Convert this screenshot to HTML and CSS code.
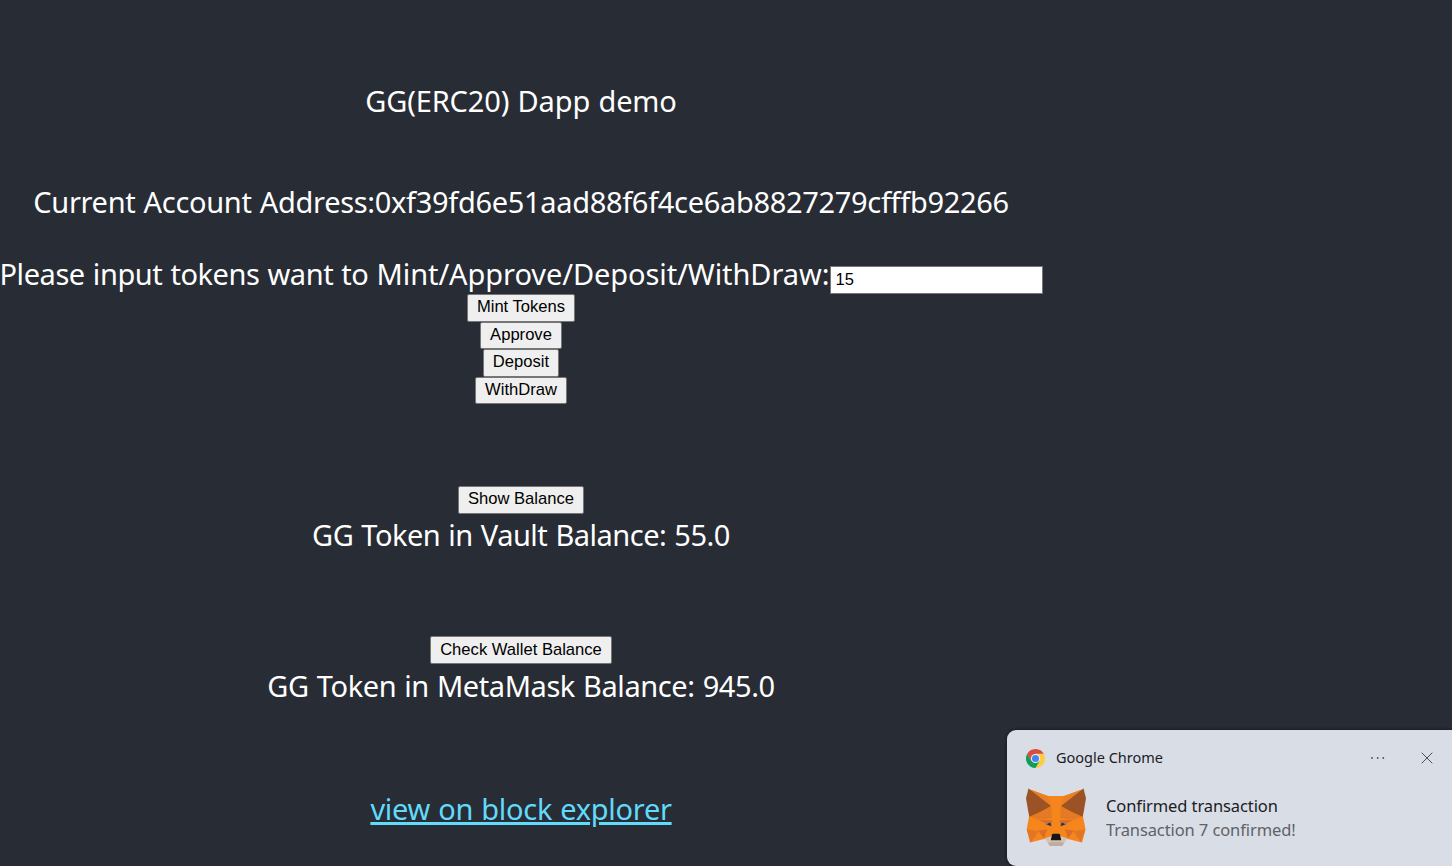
FILE: index.html
```html
<!DOCTYPE html>
<html lang="en">
<head>
<meta charset="utf-8">
<title>GG(ERC20) Dapp demo</title>
<link rel="stylesheet" href="styles.css">
</head>
<body>
<main class="app">
  <p class="line title">GG(ERC20) Dapp demo</p>
  <p class="line address">Current Account Address:0xf39fd6e51aad88f6f4ce6ab8827279cfffb92266</p>
  <div class="field">
    <label class="line prompt" for="amount">Please input tokens want to <span class="verbs">Mint/Approve/Deposit/WithDraw:</span></label>
    <input class="amount" id="amount" value="15">
  </div>
  <div class="actions">
    <button class="btn mint">Mint Tokens</button>
    <button class="btn approve">Approve</button>
    <button class="btn deposit">Deposit</button>
    <button class="btn withdraw">WithDraw</button>
  </div>
  <section class="balance">
    <button class="btn show">Show Balance</button>
    <p class="line vault">GG Token in Vault Balance: 55.0</p>
  </section>
  <section class="balance wallet">
    <button class="btn check">Check Wallet Balance</button>
    <p class="line metamask">GG Token in MetaMask Balance: 945.0</p>
  </section>
  <a class="line explorer" href="#">view on block explorer</a>
</main>
<aside class="toast">
  <header class="toast-head">
    <svg class="chrome" viewBox="0 0 48 48">
      <path fill="#ffcd40" d="M24 12H44.8A24 24 0 0 1 24 48L34.400 30z"/>
      <path fill="#0f9d58" d="M3.200 12A24 24 0 0 0 24 48L34.400 30 24 24 13.600 30z"/>
      <path fill="#db4c3f" d="M3.200 12A24 24 0 0 1 44.800 12H24L13.600 30z"/>
      <circle cx="24" cy="24" r="11.500" fill="#f1f1f1"/>
      <circle cx="24" cy="24" r="9" fill="#4285f4"/>
    </svg>
    <span class="source">Google Chrome</span>
    <svg class="more" viewBox="0 0 16 4"><g fill="#4d5056"><circle cx="2" cy="2" r=".9"/><circle cx="7.700" cy="2" r=".9"/><circle cx="13.300" cy="2" r=".9"/></g></svg>
    <svg class="close" viewBox="0 0 12 12"><path d="M.7.7l10.600 10.600M11.300.7.7 11.300" stroke="#4d5056" stroke-width="1" fill="none"/></svg>
  </header>
  <div class="toast-body">
    <svg class="fox" viewBox="0 0 60 58">
      <path fill="#f6851b" d="M2.500 1 22 8h16L57.500 1 57 28.500l2.500 13L56 54.500 38 50l-3 5H25l-3-5-18 4.500L.7 41.500 3 28.500z"/>
      <path fill="#e47a24" d="M25 18 14 24 3.200 28.500 14 32l12-2zM35 18l11 6 10.800 4.500L46 32l-12-2z"/>
      <path fill="#e98023" d="M2.500 1 22 8l3 10zM57.500 1 38 8l-3 10z"/>
      <path fill="#9b5325" d="M2.500.5 25 18 14 24 3.300 28.700 2 22 0 10.300zM57.500.5 35 18l11 6 10.700 4.700L58 22l2-11.700z"/>
      <path fill="#db6d2a" d="M13.300 32h13L25 38.500l-4-2zM46.700 32h-13L35 38.500l4-2z"/>
      <path fill="#e27625" d="M.7 41.500 12.700 43 5 54.500zM59.300 41.500 47.300 43 55 54.500z"/>
      <path fill="#dc6c2b" d="m12 42.500 9-1-3 9zM48 42.500l-9-1 3 9z"/>
      <path fill="#d7c1b3" d="m18.500 50.500 6.500-2.500h10l6.500 2.500-5 7h-13z"/>
      <path fill="#c0ad9e" d="m22 55 3-1h10l3 1-1.800 3H23.800z"/>
      <path fill="#161616" d="m26 46.500 1-.8h6l1 .8 1.200 5.700H24.800z"/>
      <path fill="#a98163" d="m18.500 37 4-2.200.5 3zM41.500 37l-4-2.200-.5 3z"/>
      <path fill="#233447" d="m20.500 36.300 3.700-1.900 1.300 3.800zM39.500 36.300l-3.700-1.900-1.300 3.800z"/>
    </svg>
    <div class="message">
      <div class="headline">Confirmed transaction</div>
      <div class="detail">Transaction 7 confirmed!</div>
    </div>
  </div>
</aside>
</body>
</html>
```
FILE: styles.css
```css
* { box-sizing: border-box; }
body {
  margin: 0;
  height: 866px;
  overflow: hidden;
  background: #282c34;
  color: #fff;
  font-family: "Noto Sans", "Open Sans", sans-serif;
}
.app {
  width: 1042px;
  padding-top: 81px;
  display: flex;
  flex-direction: column;
  align-items: center;
}
.line {
  margin: 0;
  font-size: 29px;
  line-height: 40px;
  white-space: nowrap;
  word-spacing: 1px;
}
.title { letter-spacing: -.15px; }
.address { margin-top: 61px; letter-spacing: -.32px; }
.prompt { width: 830px; letter-spacing: -.44px; }
.verbs { letter-spacing: -.08px; }
.vault { letter-spacing: -.49px; }
.metamask { letter-spacing: -.42px; }
.field {
  margin-top: 32px;
  width: 1043px;
  height: 40px;
  display: flex;
  align-items: flex-end;
  justify-content: space-between;
}
.amount {
  width: 213px;
  height: 28px;
  flex: none;
  padding: 0 5px 2px;
  border: 1.5px solid #767676;
  border-radius: 0;
  background: #fff;
  color: #000;
  font: 16.5px "Liberation Sans", Arial, sans-serif;
}
.actions {
  display: flex;
  flex-direction: column;
  align-items: center;
  height: 110px;
}
.btn {
  height: 27.5px;
  padding: 0 0 2px;
  border: 1px solid #767676;
  border-radius: 2px;
  background: #efefef;
  color: #000;
  font: 16.6px "Liberation Sans", Arial, sans-serif;
  white-space: nowrap;
}
.mint { width: 108px; }
.approve { width: 82px; padding-bottom: 1px; }
.deposit { width: 76px; }
.withdraw { width: 92px; padding-bottom: 1px; }
.show { width: 126px; }
.check { width: 182px; padding-bottom: 0; }
.balance {
  margin-top: 82px;
  display: flex;
  flex-direction: column;
  align-items: center;
  gap: 1.5px;
}
.wallet { margin-top: 81px; gap: 2.5px; }
.explorer {
  margin-top: 83px;
  color: #61dafb;
  letter-spacing: -.3px;
  text-decoration: underline;
  text-decoration-thickness: 3px;
  text-underline-offset: 2px;
}
.toast {
  position: absolute;
  left: 1007px;
  top: 730px;
  width: 445px;
  height: 136px;
  padding: 18px 19px 0 19px;
  border-radius: 9px 0 0 9px;
  background: #d9dde6;
  color: #1b1c1f;
  box-shadow: 0 0 3px 1px rgba(0, 0, 0, .35);
}
.toast-head {
  height: 20px;
  display: flex;
  align-items: center;
}
.chrome { width: 19px; height: 19px; margin-right: 11px; }
.source { padding-bottom: 2px; font-size: 14.5px; line-height: 18px; white-space: nowrap; }
.more { width: 16px; height: 4px; margin-left: auto; margin-right: 35px; }
.close { width: 12px; height: 12px; }
.toast-body {
  margin-top: 20px;
  display: flex;
  gap: 20px;
}
.fox { width: 60px; height: 58px; flex: none; }
.message {
  padding-top: 6px;
  font-size: 16.5px;
  line-height: 24px;
  letter-spacing: -.1px;
  white-space: nowrap;
}
.detail { color: #5f6268; }
```
